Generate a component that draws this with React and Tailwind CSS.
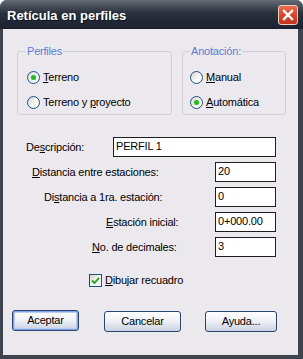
import React from 'react'

const font = { fontFamily: '"Liberation Sans", Arial, sans-serif' }

function Radio({ checked }) {
    return (
        <span className="w-[13px] h-[13px] shrink-0 rounded-full border border-[#1c5180] bg-gradient-to-br from-[#d4d3cf] via-[#f4f4f2] to-white flex items-center justify-center">
            {checked && <span className="w-[5px] h-[5px] rounded-full bg-[#2eb62a] shadow-[0_0_1px_#7fe07a]" />}
        </span>
    )
}

function RadioRow({ checked, children }) {
    return (
        <div className="flex items-center gap-[3px] h-[13px]">
            <Radio checked={checked} />
            <span className="text-[11px] leading-[13px] text-black">{children}</span>
        </div>
    )
}

function Field({ label, value, pad, wide }) {
    return (
        <div className="flex items-center justify-between h-[20px] pr-[22px]">
            <span className={`text-[11px] leading-[13px] text-black ${pad}`}>{label}</span>
            <div className={`h-[20px] ${wide ? 'w-[163px]' : 'w-[61px]'} bg-white border border-[#1e1e1e] pl-[2px] text-[11px] leading-[17px] text-black`}>
                {value}
            </div>
        </div>
    )
}

function Btn({ children, w, primary }) {
    return (
        <button className={`${w} h-[21px] rounded-[3px] border border-[#2c4470] bg-gradient-to-b from-white via-[#eef0f5] to-[#c9d0e0] text-[11px] text-black leading-[18px] ${primary ? 'shadow-[inset_0_0_0_1px_#7fa2e4,inset_0_0_0_2px_#b9cdf2]' : ''}`}>
            {children}
        </button>
    )
}

export default function App() {
    return (
        <div style={font} className="w-[303px] h-[359px] bg-[#3e444d] flex flex-col rounded-t-[7px] overflow-hidden tracking-[-0.2px]">
            {/* title bar */}
            <div className="h-[29px] shrink-0 flex items-center justify-between pl-[7px] pr-[5px] bg-gradient-to-b from-[#676d76] via-[#2a303c] via-45% to-[#1b2130]">
                <span className="text-white font-bold text-[13px] leading-[16px] mt-[2px] tracking-normal [text-shadow:1px_1px_0_#0d1220]">Retícula en perfiles</span>
                <div className="w-[20px] h-[20px] rounded-[3px] border border-[#f1d0c4] bg-gradient-to-b from-[#ea6c4c] via-[#d9452a] to-[#c2351b] flex items-center justify-center">
                    <svg width="12" height="12" viewBox="0 0 12 12">
                        <path d="M2 2 L10 10 M10 2 L2 10" stroke="white" strokeWidth="2.4" strokeLinecap="square" />
                    </svg>
                </div>
            </div>

            {/* client area */}
            <div className="flex-1 ml-[3px] mr-[5px] mb-[4px] bg-[#ece9ee] flex flex-col">
                <div className="flex gap-[10px] ml-[14px] mt-[22px]">
                    <div className="w-[155px] h-[64px] border border-[#d0d0d6] rounded-[3px] flex flex-col pl-[9px]">
                        <span className="self-start -mt-[7px] -ml-[1px] px-[1px] bg-[#ece9ee] text-[11px] leading-[13px] text-[#5b7ed4]">Perfiles</span>
                        <div className="mt-[13px] flex flex-col gap-[12px]">
                            <RadioRow checked><u>T</u>erreno</RadioRow>
                            <RadioRow>Terreno y <u>p</u>royecto</RadioRow>
                        </div>
                    </div>
                    <div className="w-[104px] h-[64px] border border-[#d0d0d6] rounded-[3px] flex flex-col pl-[7px]">
                        <span className="self-start -mt-[7px] px-[1px] bg-[#ece9ee] text-[11px] leading-[13px] text-[#5b7ed4]">Anotación:</span>
                        <div className="mt-[13px] flex flex-col gap-[12px]">
                            <RadioRow><u>M</u>anual</RadioRow>
                            <RadioRow checked><u>A</u>utomática</RadioRow>
                        </div>
                    </div>
                </div>

                <div className="mt-[22px] flex flex-col gap-[5px]">
                    <Field label={<>De<u>s</u>cripción:</>} value="PERFIL 1" pad="pl-[23px]" wide />
                    <Field label={<><u>D</u>istancia entre estaciones:</>} value="20" pad="pl-[29px]" />
                    <Field label={<>Di<u>s</u>tancia a 1ra. estación:</>} value="0" pad="pl-[41px]" />
                    <Field label={<><u>E</u>stación inicial:</>} value="0+000.00" pad="pl-[103px]" />
                    <Field label={<><u>N</u>o. de decimales:</>} value="3" pad="pl-[89px]" />
                </div>

                <div className="mt-[17px] pl-[86px] flex items-center gap-[3px]">
                    <span className="w-[13px] h-[13px] border border-[#1c5180] bg-gradient-to-br from-[#d4d3cf] via-[#f4f4f2] to-white flex items-center justify-center">
                        <svg width="9" height="9" viewBox="0 0 9 9">
                            <path d="M1 4.5 L3.5 7 L8 1.8" stroke="#21a121" strokeWidth="1.8" fill="none" />
                        </svg>
                    </span>
                    <span className="text-[11px] leading-[13px] text-black"><u>D</u>ibujar recuadro</span>
                </div>

                <div className="mt-[21px] flex items-center pl-[9px]">
                    <Btn w="w-[67px]" primary>Aceptar</Btn>
                    <div className="ml-[25px]"><Btn w="w-[77px]">Cancelar</Btn></div>
                    <div className="ml-[24px]"><Btn w="w-[72px]">Ayuda...</Btn></div>
                </div>
            </div>
        </div>
    )
}
